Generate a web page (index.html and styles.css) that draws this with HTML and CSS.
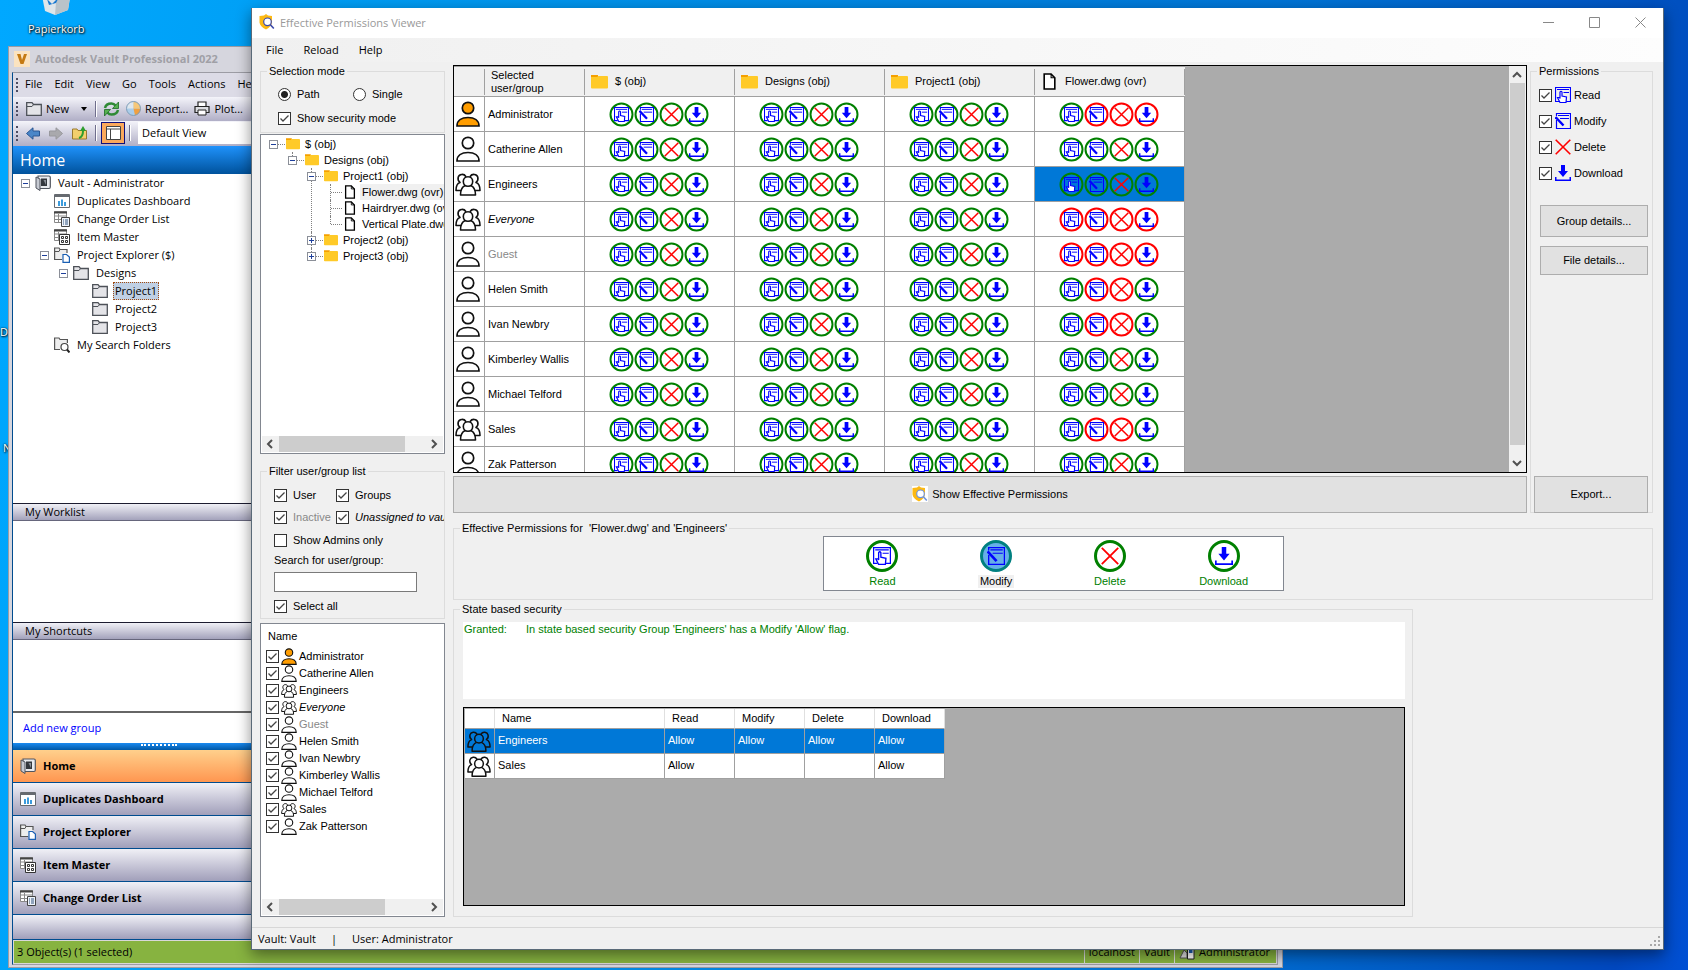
FILE: index.html
```html
<!DOCTYPE html>
<html lang="en">
<head>
    <meta charset="UTF-8">
    <meta name="viewport" content="width=device-width, initial-scale=1.0">
    <title>Effective Permissions Viewer</title>
    <link rel="stylesheet" href="styles.css">
</head>
<body>
    <!-- Icon sprite -->
    <svg class="sprite" aria-hidden="true">
        <symbol id="person" viewBox="0 0 24 26">
            <g fill="var(--icon-bg, #fff)" stroke="#111" stroke-width="1.7">
                <circle cx="12" cy="7" r="5.7"/>
                <path d="M1 25C1 19.5 5.5 16.5 12 16.5S23 19.5 23 25Z"/>
            </g>
        </symbol>
        <symbol id="group" viewBox="0 0 26 26">
            <g fill="var(--icon-bg, #fff)" stroke="#111" stroke-width="1.6" stroke-linejoin="round">
                <path d="M1 19.5C1 15 2.5 12.300 5 11.500C3 10 2.800 8 3.200 6.300C4 3 9 2.300 10.800 5.500L10 19.500Z"/>
                <path d="M25 19.5C25 15 23.5 12.300 21 11.500C23 10 23.200 8 22.800 6.300C22 3 17 2.300 15.200 5.500L16 19.500Z"/>
                <path d="M5.500 24C5.500 18 7.500 15.500 10.500 14.500H15.500C18.500 15.500 20.500 18 20.500 24Z"/>
                <circle cx="13" cy="10.500" r="4.700"/>
            </g>
        </symbol>
        <symbol id="read" viewBox="0 0 16 16">
            <g fill="none" stroke="#00f">
                <path d="M4 14.500H.5V.5H15.500V14.500H11" stroke-width="1.200"/>
                <path d="M2 2.500H14M8.500 5.500H14"/>
                <path d="M5 15.500L2.500 10.500L4.500 10.500L5 11.500V5Q6 3.500 7 5V9L11.500 10L11 15.500Z" fill="#fff" stroke-width="1.200"/>
            </g>
        </symbol>
        <symbol id="modify" viewBox="0 0 16 16">
            <g fill="none" stroke="#00f">
                <path d="M1.500 7V15.500H15.500V.5H1.500V3" stroke-width="1.200"/>
                <path d="M3 2.500H14M5 5.500H14"/>
                <path d="M.5 4L8.500 12.500" stroke-width="2.400"/>
            </g>
        </symbol>
        <symbol id="delete" viewBox="0 0 16 16">
            <path d="M.7.7L15.300 15.300M15.300.7L.7 15.300" stroke="#f00" stroke-width="1.600" fill="none"/>
        </symbol>
        <symbol id="download" viewBox="0 0 16 16">
            <path d="M6 0H10V6H13L8 12L3 6H6ZM0 12H1.500V14.500H14.500V12H16V16H0Z" fill="#00f"/>
        </symbol>
        <symbol id="folder" viewBox="0 0 17 14">
            <path d="M0 0H7V3H0Z" fill="#f5a000"/>
            <path d="M0 2H6L7.500 1H16Q17 1 17 2V12.500Q17 13.500 16 13.500H1Q0 13.500 0 12.500Z" fill="#ffca28"/>
        </symbol>
        <symbol id="file" viewBox="0 0 12 16">
            <path d="M1 1H7.500L11 4.500V15H1Z" fill="#fff" stroke="#000" stroke-width="1.500"/>
            <path d="M7.500 1V4.500H11" fill="none" stroke="#000"/>
        </symbol>
        <symbol id="shield" viewBox="0 0 16 16">
            <path d="M7 0L9 1.500L13 2V8.500Q12.500 12.500 7 15.500Q1 12.500 .5 8.500V2L5 1.500Z" fill="#fdb913"/>
            <circle cx="8.500" cy="7.800" r="3.800" fill="#fff" stroke="var(--lens, #3948ab)" stroke-width="1.200"/>
            <path d="M11.200 10.500L14.800 14.500" stroke="var(--lens, #3948ab)" stroke-width="1.600"/>
        </symbol>
        <symbol id="grey-folder" viewBox="0 0 16 14">
            <path d="M.7 13.300V.7H6L7.500 2.500H15.300V13.300Z" fill="#e4e4e8" stroke="#4d5158" stroke-width="1.300"/>
            <path d="M1 4.500H6L7.500 2.500" fill="none" stroke="#4d5158"/>
        </symbol>
        <symbol id="safe" viewBox="0 0 16 16">
            <path d="M3 1H14Q15.300 1 15.300 2.500V12Q15.300 13.500 14 13.500H3Z" fill="#e8eaee" stroke="#50555e" stroke-width="1.200"/>
            <path d="M6 3.500H12V11H6Z" fill="#33373d"/>
            <path d="M8.500 5H11V10Z" fill="#888d95"/>
            <path d="M1 2L5 4V15.500L1 13Z" fill="#c6cad2" stroke="#50555e"/>
        </symbol>
        <symbol id="dashboard" viewBox="0 0 16 14">
            <path d="M.5.5H15.500V13.500H.5Z" fill="#fff" stroke="#666a70"/>
            <path d="M.5 2H15.500" stroke="#666a70" stroke-width="2"/>
            <path d="M5 12V7M8 12V5.500M11 12V8" stroke="#3c9bdc" stroke-width="2"/>
        </symbol>
        <symbol id="order" viewBox="0 0 16 16">
            <path d="M.5.5H12.500V11.500H.5ZM.5 5H12.500M.5 8.500H12.500M4.500 3V11.500" fill="#fff" stroke="#888"/>
            <path d="M0 1.500H13" stroke="#444" stroke-width="2"/>
            <path d="M7.500 6.500H15.500V15.500H7.500Z" fill="#eef3fa" stroke="#444"/>
            <path d="M9 9H10M9 11H10M9 13H10M11 9H14M11 11H14M11 13H14" stroke="#33557f"/>
        </symbol>
        <symbol id="items" viewBox="0 0 16 16">
            <path d="M.5.5H12.500V11.500H.5ZM.5 5H12.500M.5 8.500H12.500M4.500 3V11.500" fill="#fff" stroke="#888"/>
            <path d="M0 1.500H13" stroke="#444" stroke-width="2"/>
            <path d="M5.500 5.500H15.500V15.500H5.500Z" fill="#fff" stroke="#333"/>
            <path d="M7.500 7.500H9.500V9.500H7.500ZM11.500 7.500H13.500V9.500H11.500ZM7.500 11.500H9.500V13.500H7.500ZM11.500 11.500H13.500V13.500H11.500Z" fill="none" stroke="#333"/>
        </symbol>
        <symbol id="explorer" viewBox="0 0 16 16">
            <path d="M8 12.500H.6V1H5L6 2.500H13V6" fill="#eee" stroke="#555" stroke-width="1.200"/>
            <path d="M1 4.500H5L6 2.500" fill="none" stroke="#555"/>
            <path d="M9 7.500H12.500L15.400 10V15.400H9Z" fill="#fff" stroke="#1a5fb4" stroke-width="1.200"/>
        </symbol>
        <symbol id="search-folder" viewBox="0 0 16 16">
            <path d="M6 12.500H.6V1H5L6 2.500H13.400V6" fill="#eee" stroke="#555" stroke-width="1.200"/>
            <circle cx="10.500" cy="10" r="3.500" fill="#fff" stroke="#444" stroke-width="1.200"/>
            <path d="M13 12.500L15.500 15.500" stroke="#222" stroke-width="2"/>
        </symbol>
        <symbol id="chevron" viewBox="0 0 10 10">
            <path d="M7 1L3 5L7 9" fill="none" stroke="#505050" stroke-width="2"/>
        </symbol>
    </svg>

    <div class="desktop">
        <div class="shortcut recycle-bin">
            <svg width="34" height="30" viewBox="0 0 34 30">
                <path d="M1 0H33L29 25L16 30L6 26Z" fill="#dfe6ea"/>
                <path d="M33 0L29 25L16 30L18 5Z" fill="#b9c3c9"/>
                <path d="M8 14L13 19L20 12L17 18L10 20Z" fill="#1878d0"/>
            </svg>
            <span>Papierkorb</span>
        </div>
        <div class="shortcut shortcut-d"><span>D</span></div>
        <div class="shortcut shortcut-n"><span>N</span></div>

        <!-- Vault window -->
        <section class="vault">
            <header class="vault-title">
                <svg width="16" height="16" viewBox="0 0 16 16">
                    <path d="M0 0H16V16H0Z" fill="#fbe3c0"/>
                    <path d="M3 3H6.500L8 9L10 3H13L9.500 13H6.500Z" fill="#c57a12"/>
                </svg>
                <h2>Autodesk Vault Professional 2022</h2>
            </header>
            <div class="vault-frame">
                <nav class="vault-menu grip">
                    <button>File</button><button>Edit</button><button>View</button><button>Go</button><button>Tools</button><button>Actions</button><button>Help</button>
                </nav>
                <div class="vault-tools grip">
                    <button><svg width="16" height="14"><use href="#grey-folder"/></svg>New</button>
                    <button class="more" aria-label="More"><svg width="6" height="4" viewBox="0 0 6 4"><path d="M0 0H6L3 4Z"/></svg></button>
                    <i class="sep"></i>
                    <button aria-label="Refresh">
                        <svg width="17" height="16" viewBox="0 0 17 16">
                            <path d="M2 7Q3 2.500 8.500 2.500Q11 2.500 12.500 4.500M15 9Q14 13.500 8.500 13.500Q6 13.500 4.500 11.500" fill="none" stroke="#2f8a35" stroke-width="2.500"/>
                            <path d="M15.500 1V7.500H9.500ZM1.500 15V8.500H7.500Z" fill="#55b24f" stroke="#1d6a25" stroke-width=".8"/>
                        </svg>
                    </button>
                    <button>
                        <svg width="15" height="15" viewBox="0 0 15 15">
                            <circle cx="7.500" cy="7.500" r="7" fill="#a9cdea"/>
                            <path d="M7.500 7.500V.5A7 7 0 0 0 .5 7.500Z" fill="#dfe7ee"/>
                            <path d="M7.500 7.500H14.500A7 7 0 0 1 9 14.300Z" fill="#f0a040"/>
                            <path d="M7.500.5A7 7 0 0 1 14.500 7.500H7.500Z" fill="#f7c878"/>
                            <circle cx="7.500" cy="7.500" r="7" fill="none" stroke="#7f9db8"/>
                        </svg>
                        Report...
                    </button>
                    <button>
                        <svg width="16" height="15" viewBox="0 0 16 15">
                            <path d="M4 6V1H12V6" fill="#fff" stroke="#222" stroke-width="1.200"/>
                            <path d="M1 5.500H15V11.500H1Z" fill="#dcdde2" stroke="#222" stroke-width="1.200"/>
                            <path d="M4 9H12V14H4Z" fill="#fff" stroke="#222"/>
                        </svg>
                        Plot...
                    </button>
                </div>
                <div class="vault-tools vault-tools-nav grip">
                    <button aria-label="Back"><svg width="14" height="13" viewBox="0 0 14 13"><path d="M.5 6.500L7 .8V4H13.500V9H7V12.200Z" fill="#4a86c8" stroke="#2a5793"/></svg></button>
                    <button aria-label="Forward"><svg width="14" height="13" viewBox="0 0 14 13"><path d="M13.500 6.500L7 .8V4H.5V9H7V12.200Z" fill="#a9a9ad" stroke="#98989d"/></svg></button>
                    <button aria-label="Up">
                        <svg width="16" height="14" viewBox="0 0 16 14">
                            <path d="M.5 3H5L6 4.500H14.500V13H.5Z" fill="#f3cf6d" stroke="#9a7a2e"/>
                            <path d="M7 12Q11 11 11 5" fill="none" stroke="#2f9e2f" stroke-width="2"/>
                            <path d="M8 5L11 0L14 5Z" fill="#2f9e2f"/>
                        </svg>
                    </button>
                    <i class="sep"></i>
                    <button class="active" aria-label="Navigation pane">
                        <svg width="15" height="14" viewBox="0 0 15 14"><path d="M.5.5H14.500V13.500H.5ZM.5 3H14.500M4.500 3V13.500" fill="#fff" stroke="#444"/></svg>
                    </button>
                    <i class="sep"></i>
                    <select class="view-select" aria-label="View"><option>Default View</option></select>
                </div>
                <div class="vault-main">
                    <h3 class="home-title">Home</h3>
                    <ul class="vault-tree">
                        <li>
                            <div class="node"><button class="expander" aria-label="Collapse"></button><svg width="16" height="16"><use href="#safe"/></svg><span>Vault - Administrator</span></div>
                            <ul>
                                <li><div class="node leaf"><svg width="16" height="14"><use href="#dashboard"/></svg><span>Duplicates Dashboard</span></div></li>
                                <li><div class="node leaf"><svg width="16" height="16"><use href="#order"/></svg><span>Change Order List</span></div></li>
                                <li><div class="node leaf"><svg width="16" height="16"><use href="#items"/></svg><span>Item Master</span></div></li>
                                <li>
                                    <div class="node"><button class="expander" aria-label="Collapse"></button><svg width="16" height="16"><use href="#explorer"/></svg><span>Project Explorer ($)</span></div>
                                    <ul>
                                        <li>
                                            <div class="node"><button class="expander" aria-label="Collapse"></button><svg width="16" height="14"><use href="#grey-folder"/></svg><span>Designs</span></div>
                                            <ul>
                                                <li><div class="node leaf"><svg width="16" height="14"><use href="#grey-folder"/></svg><span class="current">Project1</span></div></li>
                                                <li><div class="node leaf"><svg width="16" height="14"><use href="#grey-folder"/></svg><span>Project2</span></div></li>
                                                <li><div class="node leaf"><svg width="16" height="14"><use href="#grey-folder"/></svg><span>Project3</span></div></li>
                                            </ul>
                                        </li>
                                    </ul>
                                </li>
                                <li><div class="node leaf"><svg width="16" height="16"><use href="#search-folder"/></svg><span>My Search Folders</span></div></li>
                            </ul>
                        </li>
                    </ul>
                    <h4 class="pane-title">My Worklist</h4>
                    <div class="pane worklist"></div>
                    <h4 class="pane-title">My Shortcuts</h4>
                    <div class="pane shortcuts"></div>
                    <div class="add-group"><a href="#">Add new group</a></div>
                    <div class="splitter"></div>
                    <nav class="vault-nav">
                        <button class="active"><svg width="16" height="16"><use href="#safe"/></svg>Home</button>
                        <button><svg width="16" height="14"><use href="#dashboard"/></svg>Duplicates Dashboard</button>
                        <button><svg width="16" height="16"><use href="#explorer"/></svg>Project Explorer</button>
                        <button><svg width="16" height="16"><use href="#items"/></svg>Item Master</button>
                        <button><svg width="16" height="16"><use href="#order"/></svg>Change Order List</button>
                    </nav>
                    <div class="nav-overflow"></div>
                </div>
                <footer class="vault-status">
                    <span class="count">3 Object(s) (1 selected)</span>
                    <span class="cell">localhost</span>
                    <span class="cell">Vault</span>
                    <span class="cell user">
                        <svg width="16" height="16" viewBox="0 0 16 16"><path d="M1 14L5 6L8 9V14Z" fill="#ddd" stroke="#555"/><path d="M8.500 3.500H15V15H8.500Z" fill="#fff" stroke="#222"/><path d="M10 6H13.500V9H10Z" fill="#1a5fb4"/></svg>
                        Administrator
                    </span>
                </footer>
            </div>
        </section>

        <!-- Permissions viewer window -->
        <section class="viewer">
            <header class="viewer-title">
                <svg width="16" height="16"><use href="#shield"/></svg>
                <h1>Effective Permissions Viewer</h1>
                <button aria-label="Minimize"><svg width="11" height="11" viewBox="0 0 11 11"><path d="M0 5.500H11"/></svg></button>
                <button aria-label="Maximize"><svg width="11" height="11" viewBox="0 0 11 11"><path d="M.5.5H10.500V10.500H.5Z"/></svg></button>
                <button aria-label="Close"><svg width="11" height="11" viewBox="0 0 11 11"><path d="M.5.5L10.500 10.500M10.500.5L.5 10.500"/></svg></button>
            </header>
            <nav class="viewer-menu">
                <button>File</button><button>Reload</button><button>Help</button>
            </nav>

            <div class="viewer-body">
                <aside class="side">
                    <fieldset class="mode">
                        <legend>Selection mode</legend>
                        <div class="mode-fields">
                            <div class="mode-row">
                                <label><input type="radio" name="mode" checked>Path</label>
                                <label><input type="radio" name="mode">Single</label>
                            </div>
                            <label><input type="checkbox" checked>Show security mode</label>
                        </div>
                    </fieldset>

                    <div class="box tree-box">
                        <ul class="tree">
                            <li>
                                <div class="node"><button class="expander" aria-label="Collapse"></button><svg width="14" height="12"><use href="#folder"/></svg><span>$ (obj)</span></div>
                                <ul>
                                    <li>
                                        <div class="node"><button class="expander" aria-label="Collapse"></button><svg width="14" height="12"><use href="#folder"/></svg><span>Designs (obj)</span></div>
                                        <ul>
                                            <li>
                                                <div class="node"><button class="expander" aria-label="Collapse"></button><svg width="14" height="12"><use href="#folder"/></svg><span>Project1 (obj)</span></div>
                                                <ul>
                                                    <li><div class="node leaf"><svg width="14" height="14"><use href="#file"/></svg><span class="current">Flower.dwg (ovr)</span></div></li>
                                                    <li><div class="node leaf"><svg width="14" height="14"><use href="#file"/></svg><span>Hairdryer.dwg (ovr)</span></div></li>
                                                    <li><div class="node leaf"><svg width="14" height="14"><use href="#file"/></svg><span>Vertical Plate.dwg (ovr)</span></div></li>
                                                </ul>
                                            </li>
                                            <li><div class="node"><button class="expander closed" aria-label="Expand"></button><svg width="14" height="12"><use href="#folder"/></svg><span>Project2 (obj)</span></div></li>
                                            <li><div class="node"><button class="expander closed" aria-label="Expand"></button><svg width="14" height="12"><use href="#folder"/></svg><span>Project3 (obj)</span></div></li>
                                        </ul>
                                    </li>
                                </ul>
                            </li>
                        </ul>
                        <div class="hscroll">
                            <button aria-label="Scroll left"><svg width="10" height="10"><use href="#chevron"/></svg></button>
                            <div class="track"><div class="thumb tree-thumb"></div></div>
                            <button class="flip" aria-label="Scroll right"><svg width="10" height="10"><use href="#chevron"/></svg></button>
                        </div>
                    </div>

                    <fieldset class="filter">
                        <legend>Filter user/group list</legend>
                        <div class="filter-fields">
                            <div class="filter-grid">
                                <label><input type="checkbox" checked>User</label>
                                <label><input type="checkbox" checked>Groups</label>
                                <label class="muted"><input type="checkbox" checked>Inactive</label>
                                <label class="italic"><input type="checkbox" checked>Unassigned to vault</label>
                            </div>
                            <label><input type="checkbox">Show Admins only</label>
                            <label class="search-label" for="search">Search for user/group:</label>
                            <input type="text" id="search">
                            <label><input type="checkbox" checked>Select all</label>
                        </div>
                    </fieldset>

                    <div class="box user-box">
                        <h3>Name</h3>
                        <ul class="users" id="userList"></ul>
                        <div class="hscroll">
                            <button aria-label="Scroll left"><svg width="10" height="10"><use href="#chevron"/></svg></button>
                            <div class="track"><div class="thumb user-thumb"></div></div>
                            <button class="flip" aria-label="Scroll right"><svg width="10" height="10"><use href="#chevron"/></svg></button>
                        </div>
                    </div>
                </aside>

                <main class="content">
                    <div class="overview">
                        <div class="grid-box">
                            <div class="grid-scroll">
                                <table class="grid">
                                    <thead>
                                        <tr>
                                            <th class="col-icon"></th>
                                            <th class="col-name">Selected user/group</th>
                                            <th><div class="head"><svg width="17" height="14"><use href="#folder"/></svg>$ (obj)</div></th>
                                            <th><div class="head"><svg width="17" height="14"><use href="#folder"/></svg>Designs (obj)</div></th>
                                            <th><div class="head"><svg width="17" height="14"><use href="#folder"/></svg>Project1 (obj)</div></th>
                                            <th><div class="head"><svg width="17" height="17"><use href="#file"/></svg>Flower.dwg (ovr)</div></th>
                                        </tr>
                                    </thead>
                                    <tbody id="gridRows"></tbody>
                                </table>
                            </div>
                            <div class="vscroll">
                                <button class="up" aria-label="Scroll up"><svg width="10" height="10"><use href="#chevron"/></svg></button>
                                <div class="thumb"></div>
                                <button class="down" aria-label="Scroll down"><svg width="10" height="10"><use href="#chevron"/></svg></button>
                            </div>
                        </div>
                        <fieldset class="perms">
                            <legend>Permissions</legend>
                            <div class="perms-fields">
                                <label><input type="checkbox" checked><svg width="16" height="16"><use href="#read"/></svg>Read</label>
                                <label><input type="checkbox" checked><svg width="16" height="16"><use href="#modify"/></svg>Modify</label>
                                <label><input type="checkbox" checked><svg width="16" height="16"><use href="#delete"/></svg>Delete</label>
                                <label><input type="checkbox" checked><svg width="16" height="16"><use href="#download"/></svg>Download</label>
                                <button class="btn group-btn">Group details...</button>
                                <button class="btn file-btn">File details...</button>
                            </div>
                        </fieldset>
                        <button class="btn show-btn"><svg width="16" height="16"><use href="#shield"/></svg>Show Effective Permissions</button>
                        <button class="btn export-btn">Export...</button>
                    </div>

                    <fieldset class="effective">
                        <legend>Effective Permissions for&nbsp; 'Flower.dwg' and 'Engineers'</legend>
                        <div class="summary" id="summary"></div>
                    </fieldset>

                    <fieldset class="state">
                        <legend>State based security</legend>
                        <p class="reason"><span>Granted:</span>In state based security Group 'Engineers' has a Modify 'Allow' flag.</p>
                        <div class="acl-box">
                            <table class="acl">
                                <thead>
                                    <tr><th class="acl-icon"></th><th class="acl-name">Name</th><th>Read</th><th>Modify</th><th>Delete</th><th>Download</th></tr>
                                </thead>
                                <tbody>
                                    <tr class="selected"><td><svg width="26" height="24"><use href="#group"/></svg></td><td>Engineers</td><td>Allow</td><td>Allow</td><td>Allow</td><td>Allow</td></tr>
                                    <tr><td><svg width="26" height="24"><use href="#group"/></svg></td><td>Sales</td><td>Allow</td><td></td><td></td><td>Allow</td></tr>
                                </tbody>
                            </table>
                        </div>
                    </fieldset>
                </main>
            </div>

            <footer class="viewer-status">
                <span>Vault: Vault</span><span>|</span><span>User: Administrator</span>
                <svg class="resize" width="11" height="11" viewBox="0 0 11 11"><path d="M8 0H10V2H8ZM4 4H6V6H4ZM8 4H10V6H8ZM0 8H2V10H0ZM4 8H6V10H4ZM8 8H10V10H8Z" fill="#a8a8a8"/></svg>
            </footer>
        </section>
    </div>

    <script src="script.js"></script>
</body>
</html>
```
FILE: styles.css
```css
* {
    box-sizing: border-box;
}

body {
    margin: 0;
    font-family: 'Liberation Sans', Arial, sans-serif;
    font-size: 11px;
    line-height: 13px;
    color: #000;
}

ul {
    list-style: none;
    margin: 0;
    padding: 0;
}

h1, h2, h3, h4, p {
    margin: 0;
    font-size: inherit;
    font-weight: normal;
}

button {
    font: inherit;
    color: inherit;
    background: none;
    border: 0;
    padding: 0;
}

svg {
    flex: none;
    display: block;
}

.sprite {
    position: absolute;
    width: 0;
    height: 0;
}

.desktop {
    position: relative;
    height: 100vh;
    overflow: hidden;
    background: linear-gradient(98deg, #00a8ff 0%, #00a0f6 14%, #0090e8 35%, #0072d4 72%, #0050c0 92%, #0048c0 96%, #0050d4 100%);
}

/* Desktop shortcuts */
.shortcut {
    position: absolute;
    display: flex;
    flex-direction: column;
    align-items: center;
    font-family: 'Open Sans', sans-serif;
    line-height: 16px;
    color: #fff;
    text-shadow: 1px 1px 2px #000, 0 0 2px #000;
}

.recycle-bin {
    top: -15px;
    left: 28px;
    gap: 6px;
}

.shortcut-d {
    top: 324px;
    left: 0;
}

.shortcut-n {
    top: 440px;
    left: 3px;
}

/* Vault window */
.vault {
    position: absolute;
    top: 46px;
    bottom: 2px;
    left: 8px;
    right: 405px;
    padding: 0 4px 2px 3px;
    display: flex;
    flex-direction: column;
    font-family: 'Open Sans', 'Noto Sans', sans-serif;
    line-height: 16px;
    background: #d6d6de;
    border: 1px solid #9c9ca4;
}

.vault-title {
    display: flex;
    align-items: center;
    gap: 5px;
    height: 25px;
    padding: 0 2px 1px;
}

.vault-title h2 {
    font-weight: 700;
    color: #a0a0a6;
}

.vault-frame {
    flex: 1;
    display: flex;
    flex-direction: column;
    min-height: 0;
    border: 1px solid #9c9ca4;
    border-left-color: #004c8f;
}

.grip {
    position: relative;
}

.grip::before {
    content: '';
    position: absolute;
    left: 3px;
    top: 5px;
    bottom: 5px;
    border-left: 2px dotted #4d4d62;
}

.vault-menu {
    display: flex;
    align-items: center;
    gap: 12px;
    height: 24px;
    padding: 0 0 3px 12px;
    background: #dcdbe6;
}

.vault-tools {
    display: flex;
    align-items: center;
    gap: 6px;
    height: 24px;
    padding: 0 0 1px 13px;
    background: linear-gradient(#f4f4fa, #b0aec6);
}

.vault-tools button {
    display: flex;
    align-items: center;
    gap: 4px;
    white-space: nowrap;
}

.vault-tools .more {
    padding: 0 2px 0 6px;
}

.vault-tools .sep {
    flex: none;
    width: 2px;
    height: 16px;
    background: #6f6e8c;
    border-right: 1px solid #fff;
}

.vault-tools .active {
    flex: none;
    justify-content: center;
    width: 24px;
    height: 22px;
    margin: 0 -3px;
    background: #fba95c;
    border: 1px solid #10107c;
}

.vault-tools .view-select {
    flex: 1;
    appearance: none;
    height: 22px;
    padding: 0 4px;
    border: 0;
    border-radius: 0;
    background: #fff;
    font: inherit;
    color: #000;
}

.vault-tools-nav {
    gap: 9px;
    height: 25px;
}

.vault-tools-nav .sep {
    margin: 0 -2px;
}

.vault-main {
    flex: 1;
    display: flex;
    flex-direction: column;
    min-height: 0;
    background: #fff;
}

.home-title {
    height: 28px;
    padding-left: 7px;
    font-size: 16px;
    line-height: 28px;
    color: #fff;
    background: linear-gradient(#1f92fb, #00529c);
}

.vault-tree {
    flex: 1;
    padding-left: 8px;
}

.vault-tree ul {
    padding-left: 19px;
}

.vault-tree .node {
    display: flex;
    align-items: center;
    gap: 5px;
    height: 18px;
}

.vault-tree .leaf {
    padding-left: 14px;
}

.vault-tree .node span {
    padding: 0 1px;
    border: 1px solid transparent;
}

.vault-tree .node .current {
    background: #c0d0e4;
    border: 1px dotted #a04a10;
}

.expander {
    position: relative;
    flex: none;
    width: 9px;
    height: 9px;
    background: #fff;
    border: 1px solid #8b8f98;
}

.expander::before,
.expander.closed::after {
    content: '';
    position: absolute;
    left: 1px;
    top: 3px;
    width: 5px;
    height: 1px;
    background: #1e3f9b;
}

.expander.closed::after {
    left: 3px;
    top: 1px;
    width: 1px;
    height: 5px;
}

.pane-title {
    height: 18px;
    padding-left: 12px;
    border-top: 1px solid #1c1c30;
    border-bottom: 1px solid #66667c;
    background: linear-gradient(#f0f0f6, #a3a2bb);
}

.pane {
    border-bottom: 0 solid #666;
}

.worklist {
    height: 101px;
}

.shortcuts {
    height: 73px;
    border-bottom-width: 2px;
}

.add-group {
    height: 30px;
    padding-left: 10px;
    line-height: 30px;
}

.add-group a {
    color: #00f;
    text-decoration: none;
}

.splitter {
    height: 7px;
    background: linear-gradient(#1a8af0, #0058a6);
    position: relative;
}

.splitter::after {
    content: '';
    position: absolute;
    left: 128px;
    top: 1px;
    width: 36px;
    border-top: 2px dotted #fff;
}

.vault-nav button {
    display: flex;
    align-items: center;
    gap: 7px;
    width: 100%;
    height: 33px;
    padding-left: 7px;
    font-weight: 700;
    border-bottom: 1px solid #004c8f;
    background: linear-gradient(#f0f0f6, #a19fba);
}

.vault-nav .active {
    background: linear-gradient(#ffd08c, #ff9650);
}

.nav-overflow {
    height: 25px;
    border-bottom: 1px solid #004c8f;
    background: linear-gradient(#f0f0f6, #a19fba);
}

.vault-status {
    display: flex;
    height: 24px;
    line-height: 22px;
    background: #87b340;
    border: 1px solid #d8d8d8;
}

.vault-status .count {
    flex: 1;
    padding-left: 3px;
}

.vault-status .cell {
    display: flex;
    align-items: center;
    gap: 4px;
    padding: 0 4px;
    border-left: 1px solid #d8d8d8;
}

.vault-status .user {
    padding-right: 6px;
}

/* Viewer window */
.viewer {
    position: absolute;
    top: 8px;
    bottom: 20px;
    left: 251px;
    right: 24px;
    display: flex;
    flex-direction: column;
    background: #f0f0f0;
    border: 1px solid #5a6a78;
    border-top: 0;
    box-shadow: 0 5px 14px rgba(0, 0, 0, 0.45);
}

.viewer-title {
    display: flex;
    align-items: center;
    height: 30px;
    padding: 0 0 2px 7px;
    background: #fff;
    font-family: 'Open Sans', 'Noto Sans', sans-serif;
}

.viewer-title h1 {
    flex: 1;
    padding-left: 5px;
    color: #999;
}

.viewer-title button {
    display: flex;
    justify-content: center;
    width: 46px;
}

.viewer-title button svg {
    fill: none;
    stroke: #888;
}

.viewer-menu {
    display: flex;
    align-items: center;
    gap: 20px;
    height: 24px;
    padding: 0 0 2px 14px;
    background: linear-gradient(90deg, #f0f0f0, #fdfdfd);
    font-family: 'Open Sans', 'Noto Sans', sans-serif;
}

.viewer-body {
    flex: 1;
    display: flex;
    gap: 8px;
    min-height: 0;
    padding: 3px 10px 10px 8px;
}

fieldset {
    min-width: 0;
    margin: 0;
    padding: 0;
    border: 1px solid #dcdcdc;
}

legend {
    margin-left: 6px;
    padding: 0 2px;
}

label {
    display: flex;
    align-items: center;
    gap: 6px;
    white-space: nowrap;
}

input[type="checkbox"],
input[type="radio"] {
    appearance: none;
    flex: none;
    width: 13px;
    height: 13px;
    margin: 0;
    background: #fff;
    border: 1px solid #333;
}

input[type="radio"] {
    border-radius: 50%;
}

input[type="radio"]:checked {
    background: radial-gradient(circle, #222 3px, #fff 4px);
}

input[type="checkbox"]:checked {
    background: #fff url("data:image/svg+xml,%3Csvg xmlns='http://www.w3.org/2000/svg' viewBox='0 0 11 11'%3E%3Cpath d='M1.500 5.500L4 8L9.500 2.500' fill='none' stroke='%23444' stroke-width='1.300'/%3E%3C/svg%3E") center / 11px 11px;
}

.muted {
    color: #888;
}

.italic {
    font-style: italic;
}

.side {
    flex: none;
    display: flex;
    flex-direction: column;
    width: 185px;
}

.mode {
    height: 68px;
}

.mode-fields {
    padding: 10px 0 0 17px;
}

.mode-row {
    display: grid;
    grid-template-columns: 75px 1fr;
    margin-bottom: 11px;
}

.box {
    position: relative;
    display: flex;
    flex-direction: column;
    overflow: hidden;
    min-height: 0;
    padding: 1px;
    background: #fff;
    border: 1px solid #828790;
}

.tree-box {
    flex: 319;
    margin: 1px 0 11px;
}

.tree {
    flex: 1;
    padding-left: 7px;
}

.tree ul {
    padding-left: 19px;
}

.tree li {
    position: relative;
}

/* dotted connector lines */
.tree ul > li::before {
    content: '';
    position: absolute;
    left: 4px;
    top: 0;
    height: 100%;
    border-left: 1px dotted #808080;
}

.tree ul > li:last-child::before {
    height: 8px;
}

.tree .node {
    display: flex;
    align-items: center;
    height: 16px;
    white-space: nowrap;
}

.tree .node::after {
    content: '';
    order: -1;
    flex: none;
    width: 7px;
    border-top: 1px dotted #808080;
}

.tree .node .expander {
    order: -2;
}

.tree .node svg {
    margin: 0 3px 0 1px;
}

.tree .node span {
    padding: 0 2px;
    line-height: 16px;
}

.tree .leaf {
    padding-left: 5px;
}

.tree .leaf::after {
    width: 11px;
}

.tree .current {
    background: #f0f0f0;
}

.hscroll {
    display: flex;
    flex: none;
    height: 16px;
    background: #f0f0f0;
}

.hscroll button {
    width: 17px;
    padding-left: 3px;
}

.hscroll .track {
    flex: 1;
}

.hscroll .thumb {
    height: 100%;
    background: #cdcdcd;
}

.tree-thumb {
    width: 86%;
}

.user-thumb {
    width: 72%;
}

.flip svg {
    transform: rotate(180deg);
}

.filter {
    height: 154px;
    margin-bottom: 4px;
    overflow: hidden;
}

.filter-fields {
    padding: 11px 0 0 13px;
}

.filter-grid {
    display: grid;
    grid-template-columns: 62px 1fr;
    row-gap: 9px;
    margin-bottom: 10px;
}

.filter .search-label {
    margin-top: 7px;
    margin-bottom: 5px;
}

.filter input[type="text"] {
    display: block;
    width: 143px;
    height: 20px;
    margin-bottom: 8px;
    border: 1px solid #7a7a7a;
    background: #fff;
}

.user-box {
    flex: 293;
}

.user-box h3 {
    padding: 5px 6px;
}

.users {
    flex: 1;
    padding-left: 4px;
}

.users label {
    height: 17px;
    gap: 2px;
}

/* Right hand side */
.content {
    flex: 1;
    display: flex;
    flex-direction: column;
    min-width: 0;
}

.overview {
    flex: 1 1 449px;
    display: grid;
    grid-template-columns: minmax(0, 1fr) 123px;
    grid-template-rows: minmax(0, 1fr) 37px;
    gap: 3px;
    min-height: 0;
}

.grid-box {
    display: flex;
    overflow: hidden;
    background: #ababab;
    border: 1px solid #000;
}

.grid-scroll {
    flex: 1;
    overflow: hidden;
}

table {
    border-collapse: separate;
    border-spacing: 0;
    table-layout: fixed;
}

th {
    padding: 0;
    font-weight: normal;
    text-align: left;
}

.grid {
    width: 731px;
}

.grid .col-icon {
    width: 31px;
}

.grid .col-name {
    width: 100px;
    padding: 0 20px 0 6px;
}

.grid th {
    height: 31px;
    border-top: 1px solid #a0a0a0;
    border-bottom: 1px solid #a0a0a0;
    background: #f0f0f0 linear-gradient(#a0a0a0, #a0a0a0) right 2px / 1px 26px no-repeat;
}

.head {
    display: flex;
    align-items: center;
    gap: 7px;
    padding-left: 6px;
}

.grid td {
    height: 35px;
    padding: 0 4px 0 3px;
    background: #fff;
    border-right: 1px solid #a0a0a0;
    border-bottom: 1px solid #a0a0a0;
}

.grid td:first-child {
    padding: 0 2px 0 1px;
}

.grid td.selected {
    background: #0078d7;
}

.marks {
    display: flex;
    justify-content: center;
}

.granted {
    color: #008000;
}

.denied {
    color: #f00;
}

.vscroll {
    display: flex;
    flex-direction: column;
    width: 17px;
    background: #f0f0f0;
}

.vscroll button {
    height: 17px;
    padding-left: 3px;
}

.vscroll .up svg {
    transform: rotate(90deg);
}

.vscroll .down svg {
    transform: rotate(-90deg);
}

.vscroll .thumb {
    flex: 1;
    margin: 0 1px 10px;
    background: #cdcdcd;
}

.btn {
    display: flex;
    align-items: center;
    justify-content: center;
    gap: 4px;
    background: #e1e1e1;
    border: 1px solid #adadad;
}

.perms {
    grid-area: 1 / 2 / 3 / 3;
}

.perms-fields {
    padding: 9px 4px 0 8px;
}

.perms label {
    height: 16px;
    gap: 3px;
    margin-bottom: 10px;
}

.perms .btn {
    width: 108px;
    margin-left: 1px;
}

.perms .group-btn {
    height: 32px;
    margin-top: 24px;
    margin-bottom: 9px;
}

.file-btn {
    height: 29px;
}

.show-btn {
    grid-area: 2 / 1;
}

.show-btn svg {
    --lens: #6f94dc;
    background: #fff;
}

.export-btn {
    grid-area: 2 / 2;
    margin: 0 5px 0 4px;
}

.effective {
    height: 78px;
    margin-top: 9px;
}

.summary {
    display: grid;
    grid-template-columns: repeat(4, 1fr);
    align-items: start;
    width: 461px;
    height: 55px;
    margin: 1px auto 0;
    padding: 3px 2px 0;
    background: #fff;
    border: 1px solid #828790;
}

.summary button {
    display: flex;
    flex-direction: column;
    align-items: center;
    gap: 3px;
    color: #008000;
}

.summary span {
    padding: 0 2px;
}

.summary .active {
    color: #008080;
}

.summary .active span {
    color: #000;
    background: #f0f0f0;
}

.state {
    flex: 1 1 315px;
    display: flex;
    flex-direction: column;
    width: 80%;
    margin-top: 3px;
}

.reason {
    height: 77px;
    margin: 6px 7px 8px 9px;
    padding: 1px 0 0 1px;
    color: #008000;
    background: #fff;
}

.reason span {
    display: inline-block;
    width: 62px;
}

.acl-box {
    flex: 1;
    margin: 0 7px 10px 9px;
    overflow: hidden;
    background: #ababab;
    border: 1px solid #000;
    padding: 1px;
}

.acl {
    width: 480px;
}

.acl .acl-icon {
    width: 30px;
}

.acl .acl-name {
    width: 170px;
}

.acl th {
    height: 20px;
    padding-left: 7px;
    background: #fff;
    border-right: 1px solid #e0e0e0;
    border-bottom: 1px solid #a0a0a0;
}

.acl td {
    height: 25px;
    padding: 0 3px;
    background: #fff;
    border-right: 1px solid #a0a0a0;
    border-bottom: 1px solid #a0a0a0;
}

.acl td:first-child {
    padding: 0 1px;
}

.acl .selected td {
    --icon-bg: #0078d7;
    color: #fff;
    background: #0078d7;
}

.viewer-status {
    position: relative;
    display: flex;
    gap: 15px;
    height: 22px;
    padding-left: 6px;
    line-height: 21px;
    border-top: 1px solid #d7d7d7;
    font-family: 'Open Sans', 'Noto Sans', sans-serif;
}

.resize {
    position: absolute;
    right: 2px;
    bottom: 2px;
}
```
FILE: script.js
```js
const actions = ['read', 'modify', 'delete', 'download'];

// flags: effective rights on the file, in the order of actions
const users = [
    { name: 'Administrator', icon: 'person', admin: true, flags: '1000' },
    { name: 'Catherine Allen', icon: 'person', flags: '1111' },
    { name: 'Engineers', icon: 'group', flags: '1111', selected: true },
    { name: 'Everyone', icon: 'group', style: 'italic', flags: '0000' },
    { name: 'Guest', icon: 'person', style: 'muted', flags: '0000' },
    { name: 'Helen Smith', icon: 'person', flags: '1001' },
    { name: 'Ivan Newbry', icon: 'person', flags: '1001' },
    { name: 'Kimberley Wallis', icon: 'person', flags: '1111' },
    { name: 'Michael Telford', icon: 'person', flags: '1111' },
    { name: 'Sales', icon: 'group', flags: '1001' },
    { name: 'Zak Patterson', icon: 'person', flags: '1111' }
];

function userIcon(user, width, height) {
    const fill = user.admin ? ' style="--icon-bg: #ff9d00"' : '';
    return `<svg width="${width}" height="${height}"${fill}><use href="#${user.icon}"/></svg>`;
}

function mark(action, granted) {
    return `<svg class="${granted ? 'granted' : 'denied'}" width="25" height="25" viewBox="0 0 25 25">
        <circle cx="12.5" cy="12.5" r="11" fill="none" stroke="currentColor" stroke-width="2"/>
        <use href="#${action}" x="5" y="5" width="15" height="15"/>
    </svg>`;
}

function cell(flags, selected) {
    const marks = actions.map((action, i) => mark(action, flags[i] === '1')).join('');
    return `<td class="${selected ? 'selected' : ''}"><div class="marks">${marks}</div></td>`;
}

document.getElementById('gridRows').innerHTML = users.map(user => `
    <tr>
        <td>${userIcon(user, 26, 26)}</td>
        <td class="${user.style || ''}">${user.name}</td>
        ${cell('1111')}${cell('1111')}${cell('1111')}${cell(user.flags, user.selected)}
    </tr>`).join('');

document.getElementById('userList').innerHTML = users.map(user => `
    <li><label class="${user.style || ''}"><input type="checkbox" checked>${userIcon(user, 16, 17)}${user.name}</label></li>
`).join('');

document.getElementById('summary').innerHTML = actions.map(action => {
    const active = action === 'modify';
    const label = action[0].toUpperCase() + action.slice(1);
    return `<button class="${active ? 'active' : ''}">
        <svg width="32" height="32" viewBox="0 0 32 32">
            <circle cx="16" cy="16" r="14.5" fill="${active ? '#66aee8' : '#fff'}" stroke="currentColor" stroke-width="3"/>
            <use href="#${action}" x="7" y="7" width="18" height="18"/>
        </svg>
        <span>${label}</span>
    </button>`;
}).join('');
```
